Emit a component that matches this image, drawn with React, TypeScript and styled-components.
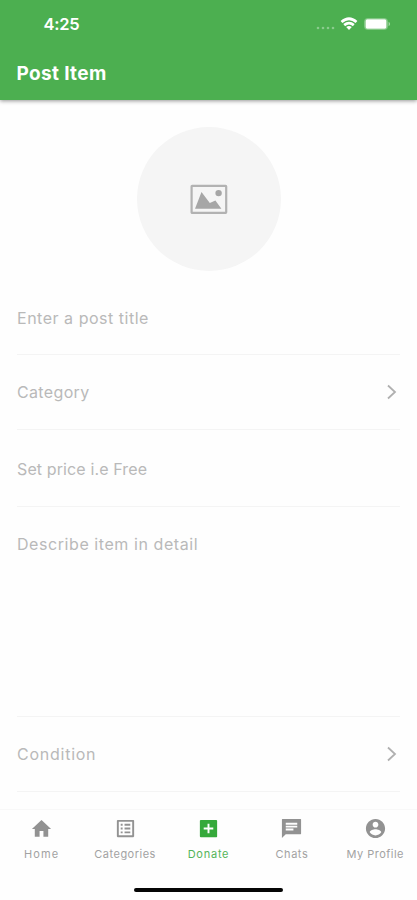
import React from "react";
import styled, { createGlobalStyle } from "styled-components";

const GlobalStyle = createGlobalStyle`
  * { box-sizing: border-box; }
  html, body { margin: 0; padding: 0; background: #fefefe; }
  body { font-family: Inter, "Liberation Sans", sans-serif; }
`;

const Screen = styled.div`
  width: 417px;
  height: 900px;
  display: flex;
  flex-direction: column;
  background: #fefefe;
  overflow: hidden;
`;

const Header = styled.header`
  flex: none;
  height: 100px;
  background: #4caf50;
  color: #fff;
  box-shadow: 0 1px 4px rgba(0, 0, 0, 0.42);
`;

const StatusBar = styled.div`
  height: 48px;
  padding: 0 26px 0 43.5px;
  display: flex;
  align-items: center;
  justify-content: space-between;
`;

const Clock = styled.span`
  font-size: 16.5px;
  line-height: 20px;
  font-weight: 600;
  letter-spacing: -0.3px;
`;

const StatusIcons = styled.div`
  display: flex;
  align-items: center;
  gap: 5px;
`;

const Title = styled.h1`
  margin: 0;
  height: 52px;
  padding-left: 16.5px;
  font-size: 19px;
  line-height: 52px;
  font-weight: 700;
  letter-spacing: 0.35px;
`;

const Form = styled.main`
  flex: 1;
  min-height: 0;
  padding: 27px 17px 0 17px;
`;

const PhotoPicker = styled.div`
  width: 144px;
  height: 144px;
  margin: 0 auto 10px;
  border-radius: 50%;
  background: #f5f5f5;
  display: flex;
  align-items: center;
  justify-content: center;
`;

const Field = styled.div<{ $height: number; $top: number }>`
  height: ${(p) => p.$height}px;
  padding: ${(p) => p.$top}px 3px 0 0;
  border-bottom: 1px solid #f4f4f4;
  display: flex;
  align-items: flex-start;
  justify-content: space-between;
`;

const Placeholder = styled.span<{ $spacing: number }>`
  font-size: 16px;
  line-height: 20px;
  font-weight: 400;
  color: #b9b9b9;
  letter-spacing: ${(p) => p.$spacing}px;
  white-space: nowrap;
`;

const TabBar = styled.nav`
  flex: none;
  height: 91px;
  display: grid;
  grid-template-columns: repeat(5, 1fr);
  grid-template-rows: 71px 20px;
  border-top: 1px solid #f8f8f8;
`;

const Tab = styled.div<{ $active?: boolean }>`
  display: flex;
  flex-direction: column;
  align-items: center;
  padding-top: 7px;
  color: ${(p) => (p.$active ? "#35a93b" : "#929292")};
`;

const TabLabel = styled.span<{ $spacing: number }>`
  margin-top: 7px;
  font-size: 11px;
  line-height: 14px;
  letter-spacing: ${(p) => p.$spacing}px;
  white-space: nowrap;
  opacity: 0.85;
`;

const HomeIndicator = styled.div`
  grid-column: 1 / -1;
  justify-self: center;
  align-self: start;
  margin-top: 7px;
  width: 149px;
  height: 4px;
  border-radius: 2px;
  background: #050505;
`;

const ChevronIcon = styled.svg`
  flex: none;
  margin-top: 2px;
`;

const Chevron = () => (
  <ChevronIcon width="10" height="16" viewBox="0 0 10 16" fill="none" stroke="#b0b0b0" strokeWidth="1.8">
    <path d="M1 1.5 8 8l-7 6.5" />
  </ChevronIcon>
);

const PictureIcon = () => (
  <svg width="38" height="30" viewBox="0 0 38 30">
    <rect x="1.6" y="1.9" width="34.6" height="27" rx="0.6" fill="none" stroke="#b2b2b2" strokeWidth="2.2" />
    <path d="M5 24.8 11.5 8l8.300 11 5.600-2.600 6 8.400z" fill="#a6a6a6" />
    <circle cx="28.6" cy="9.1" r="3.2" fill="#a6a6a6" />
  </svg>
);

const SignalDots = () => (
  <svg width="19" height="14" viewBox="0 0 19 14" fill="#fff" opacity="0.35">
    <circle cx="2" cy="11" r="1.3" />
    <circle cx="7" cy="11" r="1.3" />
    <circle cx="12" cy="11" r="1.3" />
    <circle cx="17" cy="11" r="1.3" />
  </svg>
);

const WifiIcon = () => (
  <svg width="18" height="14" viewBox="0 0 18 14" fill="none" stroke="#fff" strokeWidth="2.7">
    <path d="M1.5 5.1Q9-1.6 16.5 5.1" />
    <path d="M4.2 8.1Q9 4 13.8 8.1" />
    <path d="M6.2 10Q9 8 11.800 10L9 13z" fill="#fff" stroke="none" />
  </svg>
);

const BatteryIcon = () => (
  <svg width="28" height="14" viewBox="0 0 28 14">
    <rect x="1.5" y="1.5" width="23" height="11" rx="3" fill="none" stroke="#fff" strokeOpacity="0.3" />
    <rect x="2.5" y="2.3" width="21" height="9.4" rx="1.6" fill="#fff" />
    <path d="M25.600 4.800v4.400q1.500-.7 1.500-2.200t-1.500-2.200z" fill="#fff" opacity="0.5" />
  </svg>
);

const TabGlyph = ({ d }: { d: string }) => (
  <svg width="23" height="23" viewBox="0 0 24 24" fill="currentColor">
    <path fillRule="evenodd" d={d} />
  </svg>
);

const tabs = [
  { label: "Home", spacing: 1.1, d: "M10 20.5v-6h4v6h5v-8h3L12 3 2 12.5h3v8z" },
  {
    label: "Categories",
    spacing: 0.48,
    d: "M19 5v14H5V5h14m1.1-2H3.9c-.5 0-.9.4-.9.9v16.2c0 .4.4.9.9.9h16.2c.4 0 .9-.5.9-.9V3.9c0-.5-.5-.9-.9-.9zM11 7h6v2h-6V7zm0 4h6v2h-6v-2zm0 4h6v2h-6zM7 7h2v2H7zm0 4h2v2H7zm0 4h2v2H7z",
  },
  {
    label: "Donate",
    spacing: 0.75,
    active: true,
    d: "M20 3H4c-.6 0-1 .4-1 1v16c0 .6.4 1 1 1h16c.6 0 1-.4 1-1V4c0-.6-.4-1-1-1zm-3 10h-4v4h-2v-4H7v-2h4V7h2v4h4v2z",
  },
  {
    label: "Chats",
    spacing: 0.55,
    d: "M21.500 2H2.500c-.3 0-.5.2-.5.5V22l4-4h15.500c.3 0 .5-.2.5-.5v-15c0-.3-.2-.5-.5-.5zM6 9h12v2H6V9zm8 5H6v-2h8v2zm4-6H6V6h12v2z",
  },
  {
    label: "My Profile",
    spacing: 0.47,
    d: "M12 2C6.480 2 2 6.480 2 12s4.480 10 10 10 10-4.480 10-10S17.520 2 12 2zm0 3c1.660 0 3 1.340 3 3s-1.340 3-3 3-3-1.340-3-3 1.340-3 3-3zm0 14.200c-2.500 0-4.710-1.280-6-3.220.030-1.990 4-3.080 6-3.080 1.990 0 5.970 1.090 6 3.080-1.290 1.940-3.500 3.220-6 3.220z",
  },
];

export default function App() {
  return (
    <>
      <GlobalStyle />
      <Screen>
        <Header>
          <StatusBar>
            <Clock>4:25</Clock>
            <StatusIcons>
              <SignalDots />
              <WifiIcon />
              <BatteryIcon />
            </StatusIcons>
          </StatusBar>
          <Title>Post Item</Title>
        </Header>
        <Form>
          <PhotoPicker>
            <PictureIcon />
          </PhotoPicker>
          <Field $height={74} $top={27}>
            <Placeholder $spacing={0.52}>Enter a post title</Placeholder>
          </Field>
          <Field $height={75} $top={27}>
            <Placeholder $spacing={0.35}>Category</Placeholder>
            <Chevron />
          </Field>
          <Field $height={77} $top={29}>
            <Placeholder $spacing={0.12}>Set price i.e Free</Placeholder>
          </Field>
          <Field $height={210} $top={27}>
            <Placeholder $spacing={0.57}>Describe item in detail</Placeholder>
          </Field>
          <Field $height={75} $top={27}>
            <Placeholder $spacing={0.75}>Condition</Placeholder>
            <Chevron />
          </Field>
        </Form>
        <TabBar>
          {tabs.map((tab) => (
            <Tab key={tab.label} $active={tab.active}>
              <TabGlyph d={tab.d} />
              <TabLabel $spacing={tab.spacing}>{tab.label}</TabLabel>
            </Tab>
          ))}
          <HomeIndicator />
        </TabBar>
      </Screen>
    </>
  );
}
